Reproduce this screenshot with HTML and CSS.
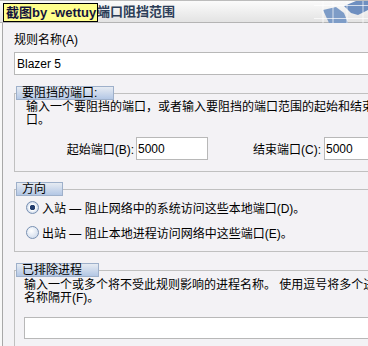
FILE: index.html
```html
<!DOCTYPE html>
<html lang="zh-CN">
<head>
  <meta charset="UTF-8">
  <title>端口阻挡范围</title>
  <link rel="stylesheet" href="styles.css">
</head>
<body>

  <div class="titlebar">
    <span class="title">端口阻挡范围</span>
    <svg class="logo" width="54" height="22" viewBox="0 0 54 22">
      <polygon points="9,9 22,6 30,12 34,22 15,22" fill="#7d9cc7"/>
      <polygon points="30,5 42,0 54,0 54,9 44,14 37,12" fill="#6e8fc0"/>
      <line x1="9" y1="0" x2="9" y2="22" stroke="#fff" stroke-opacity="0.7"/>
      <line x1="19" y1="0" x2="19" y2="22" stroke="#fff" stroke-opacity="0.7"/>
      <line x1="33" y1="0" x2="33" y2="22" stroke="#fff" stroke-opacity="0.7"/>
      <line x1="49" y1="0" x2="49" y2="22" stroke="#fff" stroke-opacity="0.7"/>
      <line x1="0" y1="4.5" x2="54" y2="4.5" stroke="#fff" stroke-opacity="0.7"/>
      <line x1="0" y1="17.5" x2="54" y2="17.5" stroke="#fff" stroke-opacity="0.7"/>
    </svg>
    <span class="stamp">截图by -wettuy</span>
  </div>

  <div class="pane">
    <label class="field-label" for="ruleName">规则名称(A)</label>
    <input class="text-input" id="ruleName" type="text" value="Blazer 5">

    <fieldset class="group group-ports">
      <legend>要阻挡的端口:</legend>
      <p class="hint">输入一个要阻挡的端口，或者输入要阻挡的端口范围的起始和结束端口。</p>
      <div class="port-row">
        <label class="port-label" for="portStart">起始端口(B):</label>
        <input class="text-input port-input" id="portStart" type="text" value="5000">
        <label class="port-label port-label-end" for="portEnd">结束端口(C):</label>
        <input class="text-input port-input" id="portEnd" type="text" value="5000">
      </div>
    </fieldset>

    <fieldset class="group group-direction">
      <legend>方向</legend>
      <label class="radio-row">
        <input class="radio" type="radio" name="direction" checked>
        <span>入站 — 阻止网络中的系统访问这些本地端口(D)。</span>
      </label>
      <label class="radio-row">
        <input class="radio" type="radio" name="direction">
        <span>出站 — 阻止本地进程访问网络中这些端口(E)。</span>
      </label>
    </fieldset>

    <fieldset class="group group-exclude">
      <legend>已排除进程</legend>
      <p class="hint">输入一个或多个将不受此规则影响的进程名称。 使用逗号将多个进程名称隔开(F)。</p>
      <input class="text-input exclude-input" type="text">
    </fieldset>
  </div>

</body>
</html>
```

FILE: styles.css
```css
html, body {
  overflow: hidden;
}
body {
  margin: 0;
  width: 368px;
  height: 346px;
  background-color: #f8f8f8;
  font-family: "Liberation Sans", "Noto Sans CJK SC", sans-serif;
  font-size: 12px;
  color: #000;
}

/* title bar */
.titlebar {
  position: relative;
  display: flex;
  align-items: center;
  justify-content: space-between;
  box-sizing: border-box;
  height: 23px;
  border-top: 1px solid #bcbcbc;
  border-bottom: 1px solid #b4b4b4;
  background: linear-gradient(#fbfbfb, #e3e3e3);
}
.title {
  padding-left: 97px;
  font-size: 13px;
  font-weight: bold;
  line-height: 20px;
  color: #2c3d57;
}
.logo {
  display: block;
}
.stamp {
  position: absolute;
  left: 3px;
  top: 2px;
  width: 91px;
  height: 17px;
  padding-left: 2px;
  border: 1px solid #000;
  background-color: #ffff8c;
  font-size: 13px;
  font-weight: bold;
  line-height: 17px;
  color: #14143c;
  white-space: nowrap;
}

/* main pane */
.pane {
  width: 400px;
  min-height: 340px;
  margin-left: 2px;
  padding: 9px 0 20px 11px;
  border-left: 1px solid #a8a8a8;
  background-color: #f3f2f5;
}
.field-label {
  display: block;
  line-height: 16px;
  margin-bottom: 4px;
}
.text-input {
  display: block;
  box-sizing: border-box;
  width: 100%;
  height: 23px;
  margin: 0;
  padding: 0 2px;
  border: 1px solid #b8b8b8;
  background-color: #fff;
  font-family: "Liberation Sans", "Noto Sans CJK SC", sans-serif;
  font-size: 12px;
  color: #000;
  outline: none;
}

/* group boxes */
.group {
  min-width: 0;
  margin: 11px 0 0 0;
  padding: 0 0 0 1px;
  border: 1px solid #c0c0c0;
  border-right: none;
}
.group legend {
  padding: 0 16px 0 5px;
  border: 1px solid #9eb0ca;
  background: linear-gradient(#e6ebf2, #b3c7e5);
  line-height: 12px;
}
.hint {
  width: 368px;
  margin: 0;
  padding: 1px 0 0 10px;
  line-height: 13px;
}

.group-ports {
  padding-bottom: 11px;
}
.port-row {
  display: flex;
  align-items: center;
  margin-top: 10px;
  padding-left: 48px;
}
.port-label {
  width: 70px;
  margin-right: 2px;
  text-align: right;
}
.port-label-end {
  margin-left: 43px;
  margin-right: 3px;
}
.port-input {
  width: 72px;
  padding-left: 1px;
}

.group-direction {
  margin-top: 10px;
  padding-top: 2px;
  padding-bottom: 10px;
}
.radio-row {
  display: flex;
  align-items: center;
  height: 18px;
  padding-left: 10px;
}
.radio-row + .radio-row {
  margin-top: 7px;
}
.radio {
  appearance: none;
  box-sizing: border-box;
  width: 13px;
  height: 13px;
  margin: 0 3px 0 0;
  border: 1px solid #7890b2;
  border-radius: 50%;
  background: radial-gradient(circle at 40% 35%, #ffffff, #c6d4e8);
}
.radio:checked {
  background: radial-gradient(circle, #243e6e 0, #243e6e 2.5px, #ffffff 3px, #c6d4e8 6px);
}

.group-exclude {
  padding-top: 1px;
  padding-bottom: 20px;
}
.group-exclude .hint {
  padding-left: 8px;
}
.exclude-input {
  width: 380px;
  height: 22px;
  margin: 12px 0 0 8px;
}
```
